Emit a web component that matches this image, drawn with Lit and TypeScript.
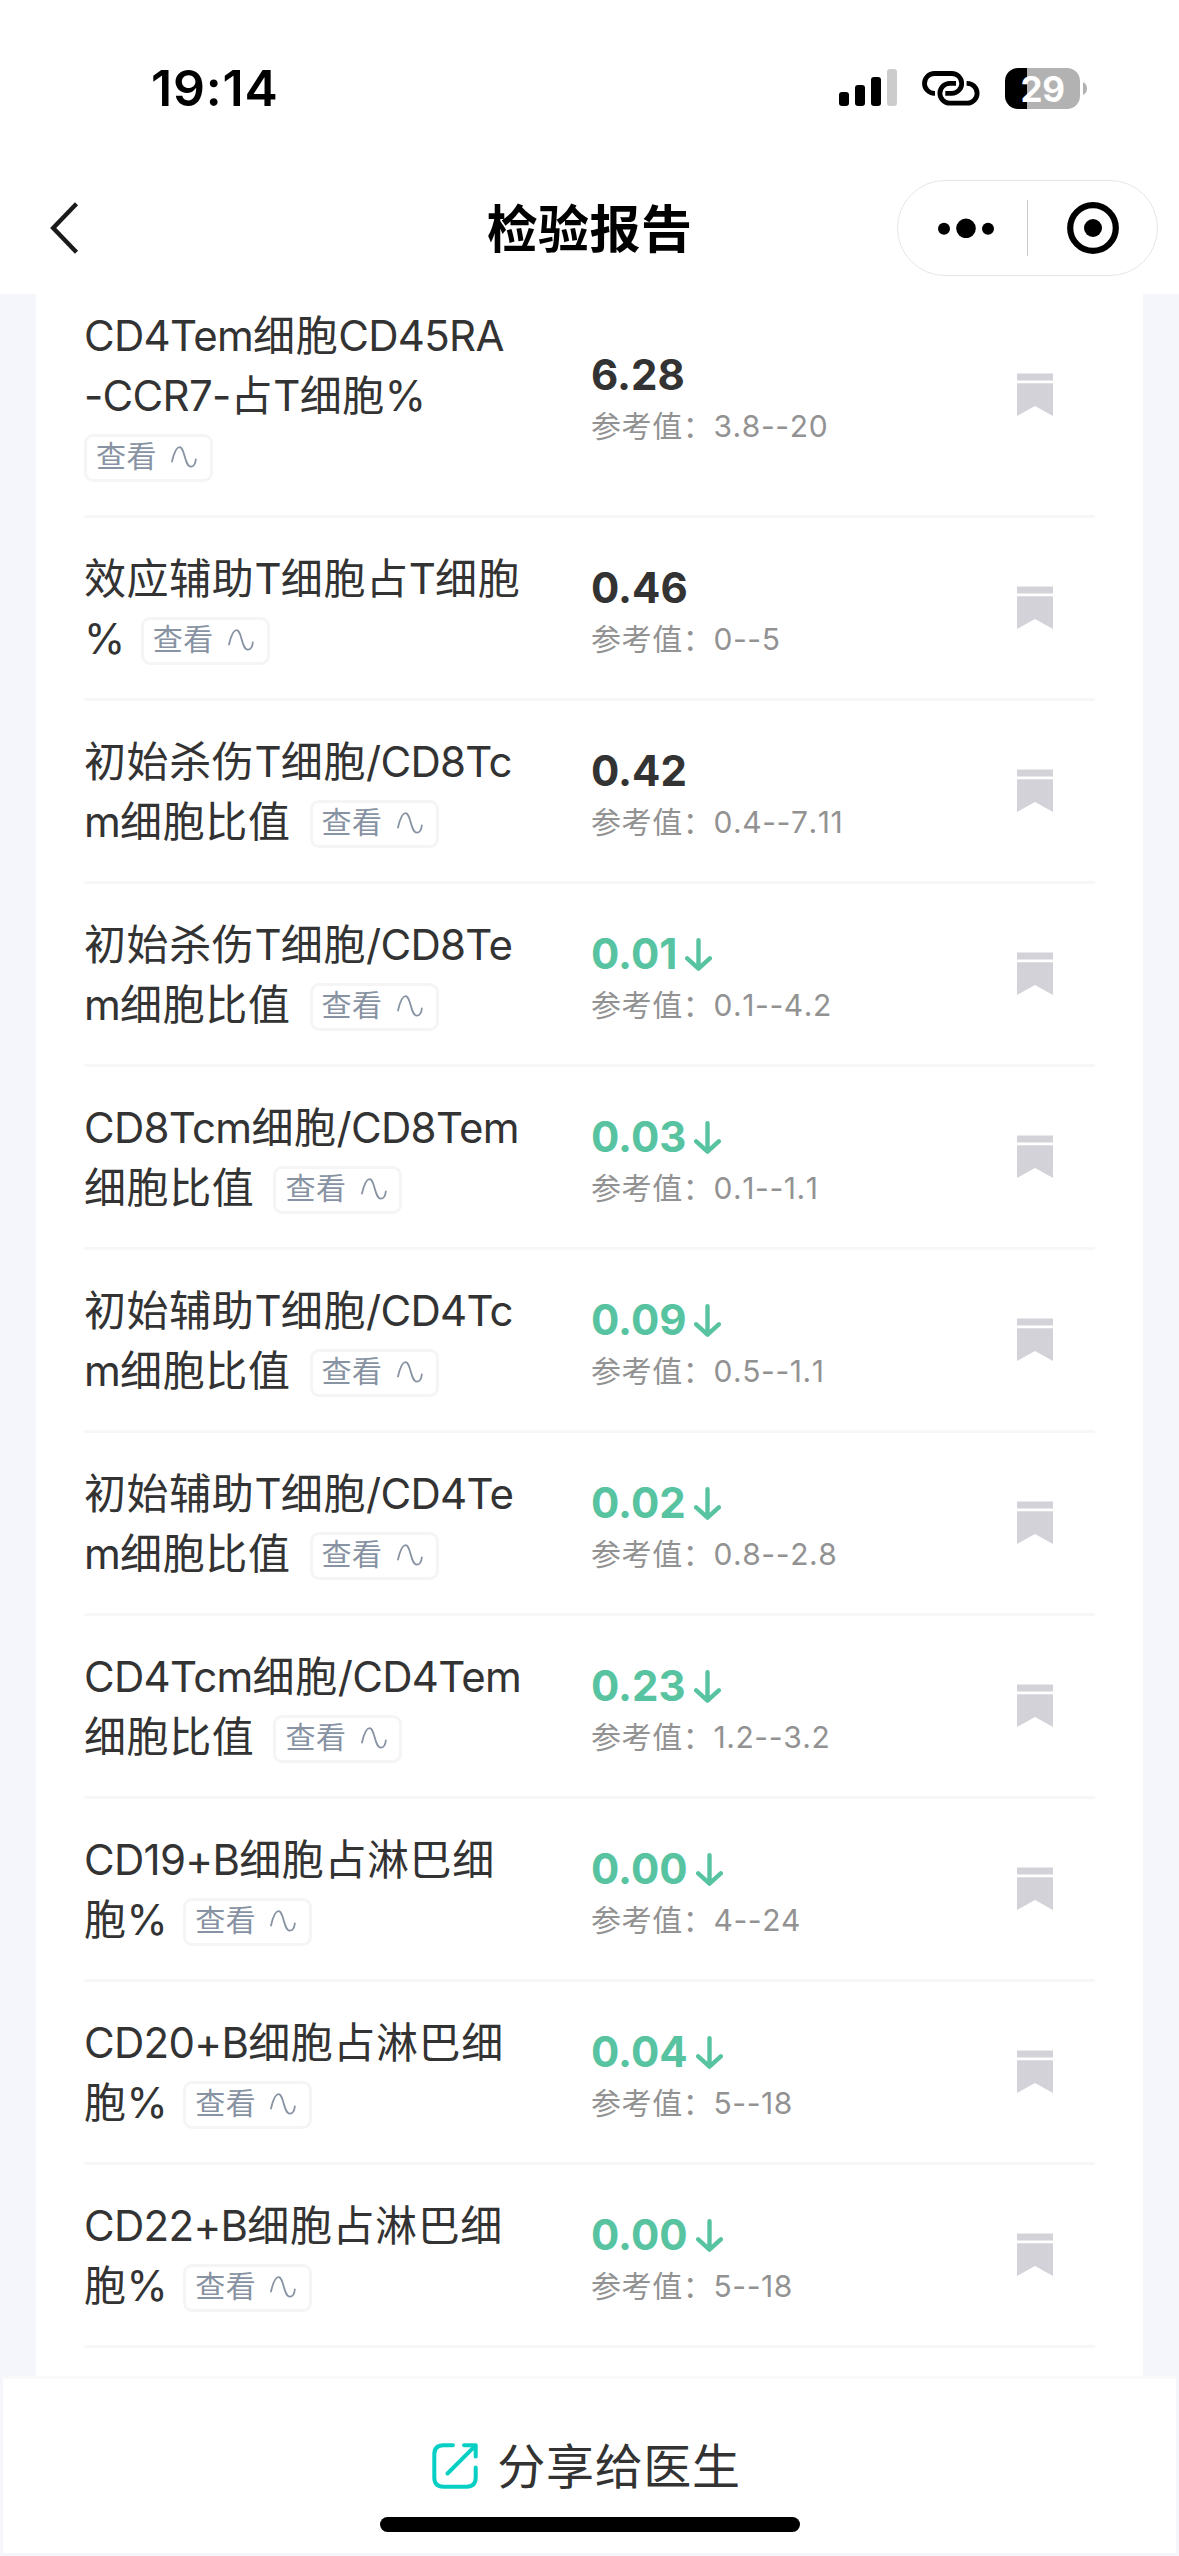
import { LitElement, html, css, nothing } from "lit";
import { customElement, property } from "lit/decorators.js";

interface Item {
  lines: string[];
  /** Whether the trend tag sits on its own line below the name. */
  tagBelow?: boolean;
  value: string;
  low?: boolean;
  range: string;
}

const ITEMS: Item[] = [
  { lines: ["CD4Tem细胞CD45RA", "-CCR7-占T细胞%"], tagBelow: true, value: "6.28", range: "3.8--20" },
  { lines: ["效应辅助T细胞占T细胞", "%"], value: "0.46", range: "0--5" },
  { lines: ["初始杀伤T细胞/CD8Tc", "m细胞比值"], value: "0.42", range: "0.4--7.11" },
  { lines: ["初始杀伤T细胞/CD8Te", "m细胞比值"], value: "0.01", low: true, range: "0.1--4.2" },
  { lines: ["CD8Tcm细胞/CD8Tem", "细胞比值"], value: "0.03", low: true, range: "0.1--1.1" },
  { lines: ["初始辅助T细胞/CD4Tc", "m细胞比值"], value: "0.09", low: true, range: "0.5--1.1" },
  { lines: ["初始辅助T细胞/CD4Te", "m细胞比值"], value: "0.02", low: true, range: "0.8--2.8" },
  { lines: ["CD4Tcm细胞/CD4Tem", "细胞比值"], value: "0.23", low: true, range: "1.2--3.2" },
  { lines: ["CD19+B细胞占淋巴细", "胞%"], value: "0.00", low: true, range: "4--24" },
  { lines: ["CD20+B细胞占淋巴细", "胞%"], value: "0.04", low: true, range: "5--18" },
  { lines: ["CD22+B细胞占淋巴细", "胞%"], value: "0.00", low: true, range: "5--18" },
];

@customElement("status-bar")
class StatusBar extends LitElement {
  static styles = css`
    :host {
      display: flex;
      align-items: center;
      justify-content: space-between;
      height: 176px;
      padding: 0 92px 0 151px;
      box-sizing: border-box;
      color: #000;
    }
    .time {
      font-size: 50px;
      font-weight: 600;
      line-height: 60px;
      letter-spacing: 0.8px;
    }
    .icons {
      display: flex;
      align-items: center;
    }
    .icons svg {
      display: block;
    }
    .link {
      margin: 0 25px 0 24px;
    }
    .battery {
      display: flex;
      align-items: center;
      gap: 3px;
    }
    .cell {
      width: 75px;
      height: 41px;
      border-radius: 13px;
      background: linear-gradient(to right, #000 22px, #b2b2b2 22px);
      color: #fff;
      font-size: 35px;
      font-weight: 700;
      line-height: 42px;
      text-align: center;
      letter-spacing: -0.5px;
    }
  `;

  render() {
    return html`
      <span class="time">19:14</span>
      <div class="icons">
        <svg width="59" height="38" viewBox="0 0 59 38">
          <rect x="0" y="23" width="10" height="14" rx="3" />
          <rect x="16" y="16" width="10" height="21" rx="3" />
          <rect x="32" y="8" width="10" height="29" rx="3" />
          <rect x="48" y="0" width="10" height="37" rx="3" fill="#ccc" />
        </svg>
        <svg class="link" width="58" height="35" viewBox="0 0 58 35" fill="none" stroke="#000" stroke-width="4.8">
          <path d="M13 22.3H12.4A9.9 9.9 0 0 1 12.4 2.5H29.8A9.9 9.9 0 0 1 29.8 22.3H23.3" />
          <path d="M34 12.4H27.8A9.9 9.9 0 0 0 27.8 32.2H45.2A9.9 9.9 0 0 0 45.2 12.4H44.6" />
        </svg>
        <div class="battery">
          <div class="cell">29</div>
          <svg width="4" height="13" viewBox="0 0 4 13"><path d="M0 0Q4 2 4 6.5T0 13Z" fill="#b2b2b2" /></svg>
        </div>
      </div>
    `;
  }
}

@customElement("nav-bar")
class NavBar extends LitElement {
  static styles = css`
    :host {
      display: grid;
      grid-template-columns: 1fr auto 1fr;
      align-items: center;
      height: 118px;
      padding: 0 21px 14px 48px;
      box-sizing: border-box;
    }
    svg {
      display: block;
    }
    .title {
      padding: 4px 27px 0 0;
      margin: 0;
      color: #000;
      font-size: 51px;
      font-weight: 700;
      line-height: 60px;
      letter-spacing: 0.4px;
    }
    .capsule {
      justify-self: end;
      display: flex;
      align-items: center;
      width: 261px;
      height: 96px;
      border: 1px solid #e6e6e6;
      border-radius: 48px;
      box-sizing: border-box;
    }
    .more {
      padding-left: 40px;
    }
    .rule {
      width: 1px;
      height: 56px;
      margin: 0 39px 0 33px;
      background: #c9c9c9;
    }
  `;

  render() {
    return html`
      <svg width="32" height="56" viewBox="0 0 32 56" fill="none" stroke="#1a1a1a" stroke-width="4.4">
        <path d="M28.5 3.8L5.2 28L28.5 52.2" />
      </svg>
      <h1 class="title">检验报告</h1>
      <div class="capsule">
        <svg class="more" width="56" height="20" viewBox="0 0 56 20">
          <circle cx="6" cy="10.7" r="6" />
          <circle cx="28" cy="10.4" r="9.8" />
          <circle cx="50" cy="10.7" r="6" />
        </svg>
        <span class="rule"></span>
        <svg width="52" height="52" viewBox="0 0 52 52">
          <circle cx="26" cy="26" r="22.8" fill="none" stroke="#000" stroke-width="6.2" />
          <circle cx="26" cy="26" r="9" />
        </svg>
      </div>
    `;
  }
}

@customElement("result-row")
class ResultRow extends LitElement {
  @property({ attribute: false }) item!: Item;

  static styles = css`
    :host {
      display: flex;
      align-items: center;
      padding: 30px 42px 30px 0;
      border-bottom: 3px solid #f7f7f7;
      color: #333;
      letter-spacing: 0.6px;
    }
    svg {
      display: block;
    }
    .name {
      width: 507px;
      font-size: 42px;
      line-height: 60px;
      white-space: nowrap;
    }
    .line {
      display: flex;
      align-items: center;
      gap: 19px;
      height: 60px;
    }
    .text {
      padding-top: 2px;
    }
    .latin {
      letter-spacing: -0.7px;
    }
    .percent {
      letter-spacing: -3.6px;
    }
    .tag {
      display: flex;
      align-items: center;
      gap: 14px;
      width: 129px;
      height: 48px;
      padding: 0 0 3px 9px;
      margin-top: 6px;
      border: 3px solid #f5f5f5;
      border-radius: 9px;
      box-sizing: border-box;
      color: #8792a2;
      font-size: 30px;
      line-height: 39px;
    }
    .result {
      flex: 1;
      padding-top: 8px;
    }
    .value {
      display: flex;
      align-items: center;
      gap: 8px;
      height: 50px;
      font-size: 42px;
      font-weight: 700;
      line-height: 50px;
      letter-spacing: 0;
    }
    .low {
      color: #57c3a0;
    }
    .range {
      height: 44px;
      margin-top: 4px;
      color: #929292;
      font-size: 30px;
      line-height: 44px;
      font-kerning: none;
    }
    .mark {
      margin-bottom: 2px;
    }
  `;

  private tag() {
    return html`<span class="tag"
      >查看<svg width="26" height="22" viewBox="0 0 26 22" fill="none" stroke="#8792a2" stroke-width="1.8" stroke-linecap="round">
        <path d="M1 15.5C3 7 5.5 1.2 8.5 1.2C14 1.2 13.5 20.6 19.8 20.6C22.8 20.6 24.4 18 24.8 13.5" /></svg
    ></span>`;
  }

  /** Latin runs are tracked tighter than the Chinese characters round them. */
  private tracked(text: string) {
    return (text.match(/%|[\x21-\x24\x26-\x7e]+|[^\x21-\x7e]+/g) ?? []).map((run) =>
      run === "%"
        ? html`<span class="percent">${run}</span>`
        : run.charCodeAt(0) < 0x7f
          ? html`<span class="latin">${run}</span>`
          : run
    );
  }

  render() {
    const { lines, tagBelow, value, low, range } = this.item;
    const last = lines.length - 1;
    return html`
      <div class="name">
        ${lines.map(
          (text, i) =>
            html`<div class="line"><span class="text">${this.tracked(text)}</span>${i === last && !tagBelow ? this.tag() : nothing}</div>`
        )}
        ${tagBelow ? html`<div class="line">${this.tag()}</div>` : nothing}
      </div>
      <div class="result">
        <div class="value ${low ? "low" : ""}">
          <span>${value}</span>
          ${low
            ? html`<svg width="27" height="33" viewBox="0 0 27 33" fill="none" stroke="currentColor" stroke-width="4.4" stroke-linecap="round" stroke-linejoin="round">
                <path d="M13.5 2.2V30M2.2 20.3L13.5 30.6L24.8 20.3" />
              </svg>`
            : nothing}
        </div>
        <div class="range">参考值：${range}</div>
      </div>
      <svg class="mark" width="36" height="43" viewBox="0 0 36 43" fill="#d3d2d8">
        <path d="M0 .4H36V7.6H0ZM0 10.2H36V43L18 33L0 43Z" />
      </svg>
    `;
  }
}

@customElement("app-root")
class AppRoot extends LitElement {
  static styles = css`
    :host {
      display: flex;
      flex-direction: column;
      width: 1179px;
      height: 2556px;
      overflow: hidden;
      background: #f4f6fb;
      font-family: Inter, "Noto Sans CJK SC", sans-serif;
    }
    .top {
      background: #fff;
    }
    .scroller {
      flex: 1;
      min-height: 0;
      overflow: hidden;
      padding: 0 36px;
    }
    .card {
      padding: 0 48px 60px;
      margin-top: -19px;
      background: #fff;
    }
    .footer {
      display: flex;
      flex-direction: column;
      align-items: center;
      height: 180px;
      border: 3px solid #f5f6fb;
      border-top-color: #f9f9f9;
      box-sizing: border-box;
      background: #fff;
    }
    .share {
      display: flex;
      align-items: center;
      gap: 19px;
      height: 72px;
      padding-right: 6px;
      margin-top: 51px;
      color: #333;
      font-size: 48px;
      line-height: 72px;
      letter-spacing: 0.7px;
    }
    .label {
      padding-top: 2px;
    }
    .home {
      width: 420px;
      height: 15px;
      margin-top: 15px;
      border-radius: 8px;
      background: #000;
    }
  `;

  render() {
    return html`
      <header class="top">
        <status-bar></status-bar>
        <nav-bar></nav-bar>
      </header>
      <main class="scroller">
        <div class="card">${ITEMS.map((item) => html`<result-row .item=${item}></result-row>`)}</div>
      </main>
      <footer class="footer">
        <div class="share">
          <svg width="46" height="46" viewBox="0 0 46 46" fill="none" stroke="#07cfc4" stroke-width="4" stroke-linecap="round" stroke-linejoin="round">
            <path d="M21 2.3H11.5Q2.3 2.3 2.3 11.5V34.5Q2.3 43.7 11.5 43.7H34.5Q43.7 43.7 43.7 34.5V24.5" />
            <path d="M32 2.3H43.7V13.5M43.7 2.3L15.5 30.5" />
          </svg>
          <span class="label">分享给医生</span>
        </div>
        <div class="home"></div>
      </footer>
    `;
  }
}
